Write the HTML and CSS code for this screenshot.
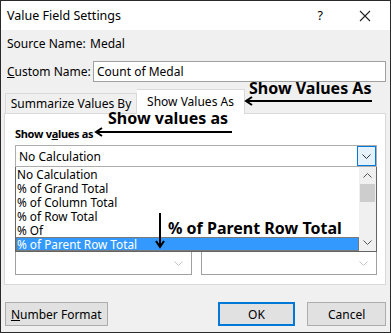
FILE: index.html
```html
<!DOCTYPE html>
<html lang="en">
<head>
    <meta charset="UTF-8">
    <meta name="viewport" content="width=device-width, initial-scale=1.0">
    <title>Value Field Settings</title>
    <link rel="stylesheet" href="styles.css">
</head>
<body>

    <div class="dialog">

        <!-- Title bar -->
        <div class="titlebar">
            <span class="title">Value Field Settings</span>
            <span class="help">?</span>
            <svg class="close" width="12" height="12" viewBox="0 0 12 12">
                <path d="M1 1 L11 11 M11 1 L1 11" stroke="#222" stroke-width="1.1" fill="none"/>
            </svg>
        </div>

        <div class="content">
            <div class="field-row source-row">
                <span class="field-label">Source Name:</span>
                <span class="source-value">Medal</span>
            </div>
            <div class="field-row custom-row">
                <span class="field-label"><u>C</u>ustom Name:</span>
                <div class="text-input">Count of Medal</div>
            </div>

            <!-- Tabs -->
            <div class="tabs">
                <div class="tab">Summarize Values By</div>
                <div class="tab tab-active">Show Values As</div>
            </div>

            <div class="panel">
                <div class="panel-label">Show v<u>a</u>lues as</div>

                <div class="select">
                    <span>No Calculation</span>
                    <div class="select-btn">
                        <svg width="9" height="5" viewBox="0 0 9 5"><path d="M0.5 0.5 L4.5 4.5 L8.5 0.5" stroke="#333" fill="none"/></svg>
                    </div>
                </div>

                <div class="listbox">
                    <div class="options">
                        <div class="option">No Calculation</div>
                        <div class="option">% of Grand Total</div>
                        <div class="option">% of Column Total</div>
                        <div class="option">% of Row Total</div>
                        <div class="option">% Of</div>
                        <div class="option option-selected">% of Parent Row Total</div>
                    </div>
                    <div class="scrollbar">
                        <svg class="scroll-arrow" width="9" height="5" viewBox="0 0 9 5"><path d="M0.5 4.5 L4.5 0.5 L8.5 4.5" stroke="#555" fill="none"/></svg>
                        <div class="thumb"></div>
                        <div class="track"></div>
                        <svg class="scroll-arrow" width="9" height="5" viewBox="0 0 9 5"><path d="M0.5 0.5 L4.5 4.5 L8.5 0.5" stroke="#555" fill="none"/></svg>
                    </div>
                </div>

                <div class="lower-row">
                    <div class="lower-box">
                        <svg width="9" height="5" viewBox="0 0 9 5"><path d="M0.5 0.5 L4.5 4.5 L8.5 0.5" stroke="#c4c4c4" fill="none"/></svg>
                    </div>
                    <div class="lower-box">
                        <svg width="9" height="5" viewBox="0 0 9 5"><path d="M0.5 0.5 L4.5 4.5 L8.5 0.5" stroke="#c4c4c4" fill="none"/></svg>
                    </div>
                </div>
            </div>

            <!-- Buttons -->
            <div class="btn-row">
                <button class="btn btn-format"><u>N</u>umber Format</button>
                <button class="btn btn-ok">OK</button>
                <button class="btn btn-cancel">Cancel</button>
            </div>
        </div>

        <!-- Callouts drawn over the dialog -->
        <div class="note note-tab">Show Values As</div>
        <div class="note note-label">Show values as</div>
        <div class="note note-item">% of Parent Row Total</div>
        <svg class="arrows" width="391" height="333" viewBox="0 0 391 333">
            <g stroke="#000" stroke-width="2" fill="none">
                <path d="M246 101 L372 101 M252 97 L246 101 L252 105"/>
                <path d="M96 132 L232 132 M102 128 L96 132 L102 136"/>
                <path d="M160 213 L160 247 M156 241 L160 247 L164 241"/>
            </g>
        </svg>
    </div>

</body>
</html>
```

FILE: styles.css
```css
body { margin: 0; font-family: "Noto Sans", Arial, sans-serif; font-size: 12px; color: #000; }

.dialog {
    position: relative;
    width: 391px;
    height: 333px;
    box-sizing: border-box;
    border: 1px solid #2a2a2a;
    background-color: #f0f0f0;
    overflow: hidden;
}

.titlebar {
    display: flex;
    align-items: center;
    height: 29px;
    padding-left: 6px;
    background-color: #fff;
}
.title { flex: 1; font-size: 12.5px; }
.help { margin-right: 36px; font-size: 12.5px; }
.close { margin-right: 19px; }

.content { padding: 0 4px 0 3px; }

.field-row { display: flex; align-items: center; padding-left: 3px; }
.field-label { width: 86px; }
.source-row { height: 20px; margin-top: 3px; }
.source-value { margin-left: -3px; }
.custom-row { height: 21px; margin-top: 8px; }
.text-input {
    flex: 1;
    height: 21px;
    box-sizing: border-box;
    padding: 1px 3px;
    line-height: 17px;
    background-color: #fff;
    border: 1px solid #a0a0a0;
}

.tabs { display: flex; align-items: flex-end; height: 25px; margin-top: 6px; padding-left: 1px; }
.tab {
    height: 20px;
    width: 132px;
    box-sizing: border-box;
    padding: 0;
    line-height: 20px;
    white-space: nowrap;
    text-align: center;
    border: 1px solid #d9d9d9;
    border-bottom: none;
    background-color: #f0f0f0;
}
.tab-active {
    height: 25px;
    width: 108px;
    line-height: 24px;
    background-color: #fff;
    border-left: none;
    position: relative;
    top: 1px;
}

.panel {
    height: 172px;
    box-sizing: border-box;
    border: 1px solid #d9d9d9;
    background-color: #fff;
    padding: 12px 8px 0 10px;
}
.panel-label { height: 16px; line-height: 16px; font-weight: bold; font-size: 11px; letter-spacing: -0.3px; }

.select {
    display: flex;
    align-items: center;
    height: 22px;
    margin-top: 3px;
    box-sizing: border-box;
    border: 1px solid #adadad;
    padding-left: 3px;
}
.select span { flex: 1; }
.select-btn {
    width: 19px;
    height: 20px;
    box-sizing: border-box;
    border: 1px solid #0078d7;
    background-color: #e5f1fb;
    display: flex;
    align-items: center;
    justify-content: center;
}

.listbox {
    display: flex;
    height: 85px;
    box-sizing: border-box;
    border: 1px solid #646464;
    border-top: none;
    background-color: #fff;
}
.options { flex: 1; font-size: 11.8px; }
.option { height: 14px; line-height: 14px; padding-left: 1px; white-space: nowrap; overflow: hidden; }
.option-selected { background-color: #3399ff; color: #fff; outline: 1px solid #7a7a7a; outline-offset: -1px; }

.scrollbar {
    width: 17px;
    display: flex;
    flex-direction: column;
    align-items: center;
    background-color: #f0f0f0;
}
.scroll-arrow { margin: 6px 0; }
.thumb { width: 15px; height: 18px; background-color: #cdcdcd; }
.track { flex: 1; }

.lower-row { display: flex; gap: 9px; }
.lower-box {
    flex: 1;
    height: 23px;
    box-sizing: border-box;
    border: 1px solid #a0a0a0;
    border-top: none;
    display: flex;
    align-items: center;
    justify-content: flex-end;
    padding-right: 8px;
}

.btn-row { display: flex; margin-top: 17px; padding-left: 1px; }
.btn {
    height: 24px;
    box-sizing: border-box;
    font-family: inherit;
    font-size: 12px;
    background-color: #e1e1e1;
    border: 1px solid #adadad;
    padding: 0;
}
.btn-format { width: 103px; }
.btn-ok { width: 78px; margin-left: 110px; border: 2px solid #0078d7; }
.btn-cancel { width: 79px; margin-left: 12px; }

.note {
    position: absolute;
    font-weight: bold;
    font-size: 16px;
    line-height: 18px;
    white-space: nowrap;
}
.note-tab { left: 248px; top: 78px; }
.note-label { left: 107px; top: 108px; }
.note-item { left: 167px; top: 218px; }
.arrows { position: absolute; left: -1px; top: -1px; }
```
